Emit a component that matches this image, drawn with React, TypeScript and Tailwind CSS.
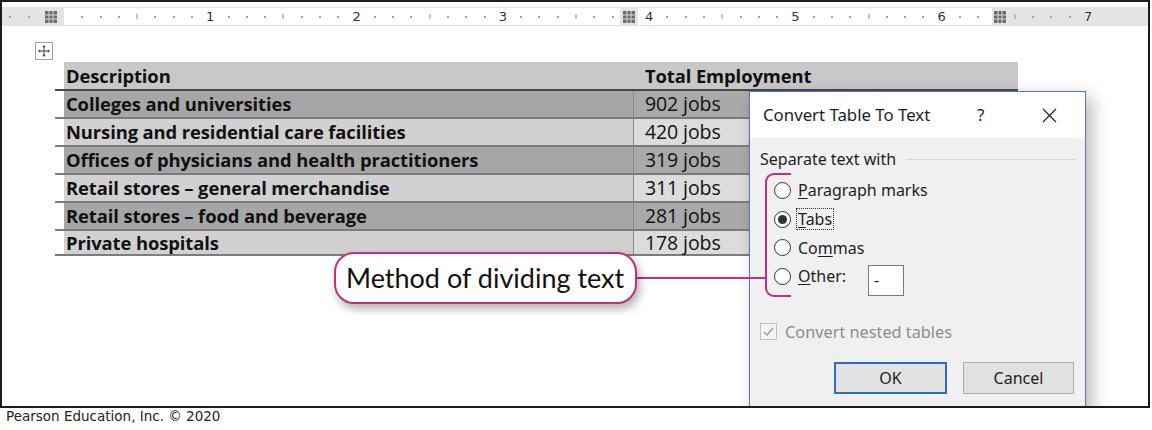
import React from "react";

const rows = [
  { label: "Colleges and universities", jobs: "902 jobs", dark: true },
  { label: "Nursing and residential care facilities", jobs: "420 jobs", dark: false },
  { label: "Offices of physicians and health practitioners", jobs: "319 jobs", dark: true },
  { label: "Retail stores \u2013 general merchandise", jobs: "311 jobs", dark: false },
  { label: "Retail stores \u2013 food and beverage", jobs: "281 jobs", dark: true },
  { label: "Private hospitals", jobs: "178 jobs", dark: false },
];

const inches = [1, 2, 3, 4, 5, 6, 7];
const eighths = [1, 2, 3, 4, 5, 6, 7];

function GridMark() {
  return (
    <svg width="12" height="12" viewBox="0 0 12 12" className="block">
      <rect x="0" y="0" width="12" height="12" fill="#6b6b6b" />
      <path d="M4 0V12M8 0V12M0 4H12M0 8H12" stroke="#d9d9d9" strokeWidth="1" />
    </svg>
  );
}

function Ruler() {
  return (
    <div className="relative mt-[5px] flex h-[19px] border-y border-[#e2e2e2] bg-[linear-gradient(to_right,#e4e4e4_62px,#ffffff_62px,#ffffff_990px,#e4e4e4_990px)] text-[12px] leading-none text-[#333]">
      <div className="flex w-[62px] shrink-0 items-center">
        <span className="ml-[7px] h-[2px] w-[2px] bg-[#a3a3a3]" />
        <span className="ml-[17px] h-[2px] w-[2px] bg-[#a3a3a3]" />
      </div>
      {inches.map((n) => (
        <div key={n} className="flex w-[146.3px] shrink-0">
          {eighths.map((e) => (
            <div key={e} className="flex w-[18.29px] items-center justify-end">
              {e === 4 ? (
                <span className="h-[5px] w-px translate-x-1/2 bg-[#8a8a8a]" />
              ) : (
                <span className="h-[2px] w-[2px] translate-x-1/2 bg-[#a3a3a3]" />
              )}
            </div>
          ))}
          <div className="flex w-[18.29px] items-center justify-end">
            <span className="translate-x-1/2 font-['DejaVu_Sans',sans-serif] text-[13px]">{n}</span>
          </div>
        </div>
      ))}
      <div className="absolute left-[43px] top-[3px]">
        <GridMark />
      </div>
      <div className="absolute left-[618px] top-0 flex h-[17px] w-[18px] items-center justify-center bg-[#e4e4e4]">
        <GridMark />
      </div>
      <div className="absolute left-[992px] top-[3px]">
        <GridMark />
      </div>
    </div>
  );
}

function MoveHandle() {
  return (
    <div className="ml-[33px] mt-[16px] flex h-[18px] w-[18px] items-center justify-center border border-[#a0a0a0] bg-white">
      <svg width="12" height="12" viewBox="0 0 12 12">
        <path d="M6 1V11M1 6H11" stroke="#444" strokeWidth="1" />
        <path d="M6 0L4.3 2.2H7.7Z M6 12L4.3 9.8H7.7Z M0 6L2.2 4.3V7.7Z M12 6L9.8 4.3V7.7Z" fill="#444" />
      </svg>
    </div>
  );
}

function Table() {
  return (
    <div className="ml-[53px] mt-[2px] w-[963px] font-['Open_Sans',sans-serif] text-[18.4px] leading-[24px] tracking-[-0.1px] text-[#111]">
      <div className="flex h-[29px] border-b-2 border-[#4a4a4a]">
        <div className="w-[9px] shrink-0 bg-white" />
        <div className="flex flex-1 items-center bg-[#c8c8c8] font-bold">
          <div className="w-[569px] shrink-0 pl-[2px]">Description</div>
          <div className="pl-[12px]">Total Employment</div>
        </div>
      </div>
      {rows.map((r, i) => (
        <div
          key={r.label}
          className={`flex border-b-2 border-[#7c7c7c] ${i === rows.length - 1 ? "h-[25px]" : "h-[28px]"}`}
        >
          <div className="w-[9px] shrink-0 bg-white" />
          <div
            className={`flex w-[569px] shrink-0 items-center pl-[2px] font-bold ${
              r.dark ? "bg-[#a6a6a6]" : "bg-[#d1d1d1]"
            }`}
          >
            {r.label}
          </div>
          <div
            className={`flex w-[115px] shrink-0 items-center border-l border-[#8a8a8a] pl-[11px] text-[19.5px] ${
              r.dark ? "bg-[#a9a9a9]" : "bg-[#dcdcdc]"
            }`}
          >
            {r.jobs}
          </div>
          <div className={`flex-1 ${r.dark ? "bg-[#a6a6a6]" : "bg-[#d1d1d1]"}`} />
        </div>
      ))}
    </div>
  );
}

function Radio({ checked, children }: { checked?: boolean; children: React.ReactNode }) {
  return (
    <div className="flex h-[28.7px] items-center">
      <span className="flex h-[17px] w-[17px] items-center justify-center rounded-full border border-[#333] bg-white">
        {checked && <span className="h-[9px] w-[9px] rounded-full bg-[#333]" />}
      </span>
      <div className="ml-[7px] flex items-center">{children}</div>
    </div>
  );
}

function Dialog() {
  return (
    <div className="absolute left-[747px] top-[89px] h-[330px] w-[337px] border border-[#4a7bc6] bg-[#f0f0f0] font-['Noto_Sans',sans-serif] text-[16px] text-[#1e1e1e] shadow-[6px_6px_16px_rgba(0,0,0,0.28)]">
      <div className="flex h-[46px] items-center bg-white pl-[13px] pr-[28px]">
        <span className="text-[16.8px]">Convert Table To Text</span>
        <span className="ml-[47px] text-[16.5px]">?</span>
        <svg width="15" height="15" viewBox="0 0 15 15" className="ml-auto">
          <path d="M1 1L14 14M14 1L1 14" stroke="#222" strokeWidth="1.2" />
        </svg>
      </div>
      <div className="px-[10px] pt-[11px]">
        <div className="flex h-[20px] items-center">
          <span>Separate text with</span>
          <div className="ml-[10px] mr-[-1px] h-px flex-1 bg-[#d6d6d6]" />
        </div>
        <div className="mt-[7px] pl-[14px]">
          <Radio>
            <span>
              <u className="underline-offset-2">P</u>aragraph marks
            </span>
          </Radio>
          <Radio checked>
            <span className="-ml-[2px] border border-dotted border-[#333] px-[1px] leading-[20px]">
              <u className="underline-offset-2">T</u>abs
            </span>
          </Radio>
          <Radio>
            <span>
              Co<u className="underline-offset-2">m</u>mas
            </span>
          </Radio>
          <Radio>
            <span>
              <u className="underline-offset-2">O</u>ther:
            </span>
            <div className="ml-[22px] mt-[8px] flex h-[31px] w-[36px] items-center border border-[#7a7a7a] bg-white pl-[5px]">
              -
            </div>
          </Radio>
        </div>
        <div className="mt-[31px] flex h-[20px] items-center text-[16.3px] text-[#8c8c8c]">
          <span className="flex h-[17px] w-[17px] items-center justify-center border border-[#c2c2c2] bg-[#f4f4f4]">
            <svg width="13" height="13" viewBox="0 0 13 13">
              <path d="M2 7L5 10L11 3" stroke="#9a9a9a" strokeWidth="1.3" fill="none" />
            </svg>
          </span>
          <span className="ml-[8px]">Convert nested tables</span>
        </div>
        <div className="mr-[1px] mt-[20px] flex justify-end gap-[16px]">
          <div className="flex h-[32px] w-[113px] items-center justify-center border-2 border-[#2f6cc4] bg-[#e1e1e1]">
            OK
          </div>
          <div className="flex h-[32px] w-[111px] items-center justify-center border border-[#adadad] bg-[#e1e1e1]">
            Cancel
          </div>
        </div>
      </div>
    </div>
  );
}

export default function App() {
  return (
    <div className="h-[430px] w-[1152px] bg-white">
      <div className="relative h-[408px] w-[1150px] overflow-hidden border-2 border-[#1c1c1c]">
        <Ruler />
        <MoveHandle />
        <Table />
        <Dialog />
        {/* annotation: bracket, connector, callout */}
        <div className="absolute left-[763px] top-[171px] h-[124px] w-[26px] rounded-l-[9px] border-y-2 border-l-2 border-[#c2307c]" />
        <div className="absolute left-[634px] top-[275px] h-[2px] w-[130px] bg-[#c2307c]" />
        <div className="absolute left-[332px] top-[250px] flex h-[52px] w-[303px] items-center rounded-[20px] border-2 border-[#c2307c] bg-white pl-[10px] font-['Lato',sans-serif] text-[27px] text-[#111] shadow-[3px_5px_10px_rgba(0,0,0,0.3)]">
          Method of dividing text
        </div>
      </div>
      <div className="pl-[6px] font-['DejaVu_Sans',sans-serif] text-[13.5px] leading-[16px] text-[#222]">
        Pearson Education, Inc. © 2020
      </div>
    </div>
  );
}
